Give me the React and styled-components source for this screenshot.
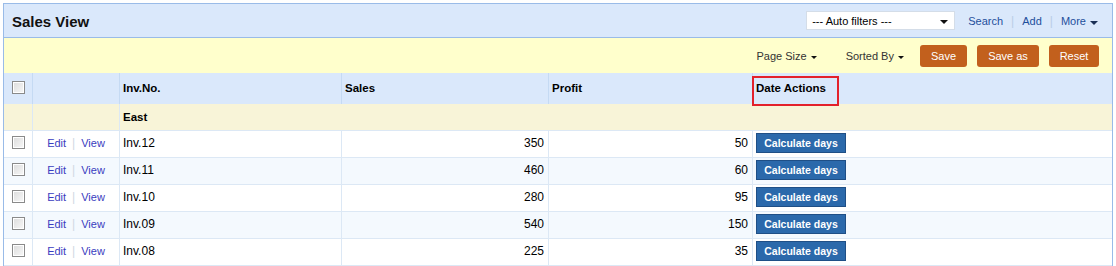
import React from 'react';
import styled, { createGlobalStyle } from 'styled-components';

const rows = [
  { inv: 'Inv.12', sales: 350, profit: 50 },
  { inv: 'Inv.11', sales: 460, profit: 60 },
  { inv: 'Inv.10', sales: 280, profit: 95 },
  { inv: 'Inv.09', sales: 540, profit: 150 },
  { inv: 'Inv.08', sales: 225, profit: 35 },
];

const App = () => {
  return (
    <>
      <GlobalStyle />
      <Panel>
        <TitleBar>
          <Title>Sales View</Title>
          <TopTools>
            <FilterSelect>
              <span>--- Auto filters ---</span>
              <Caret />
            </FilterSelect>
            <TopLink>Search</TopLink>
            <Pipe>|</Pipe>
            <TopLink>Add</TopLink>
            <Pipe>|</Pipe>
            <TopLink>More <Caret $color="#1a2f55" /></TopLink>
          </TopTools>
        </TitleBar>
        <Toolbar>
          <Menu>Page Size <Caret $small /></Menu>
          <Menu $gap={16}>Sorted By <Caret $small /></Menu>
          <OrangeButton $w={47}>Save</OrangeButton>
          <OrangeButton $w={62}>Save as</OrangeButton>
          <OrangeButton $w={50}>Reset</OrangeButton>
        </Toolbar>
        <Grid>
          <HeadCell $center><Check /></HeadCell>
          <HeadCell />
          <HeadCell>Inv.No.</HeadCell>
          <HeadCell>Sales</HeadCell>
          <HeadCell>Profit</HeadCell>
          <HeadCell $last>
            Date Actions
            <Highlight />
          </HeadCell>

          <GroupCell />
          <GroupCell />
          <GroupCell $span>East</GroupCell>

          {rows.map((r, i) => (
            <React.Fragment key={r.inv}>
              <Cell $alt={i % 2 === 1} $center><Check /></Cell>
              <Cell $alt={i % 2 === 1} $center>
                <RowLink>Edit</RowLink>
                <LinkPipe>|</LinkPipe>
                <RowLink>View</RowLink>
              </Cell>
              <Cell $alt={i % 2 === 1}>{r.inv}</Cell>
              <Cell $alt={i % 2 === 1} $right>{r.sales}</Cell>
              <Cell $alt={i % 2 === 1} $right>{r.profit}</Cell>
              <Cell $alt={i % 2 === 1} $last $action>
                <BlueButton>Calculate days</BlueButton>
              </Cell>
            </React.Fragment>
          ))}
        </Grid>
      </Panel>
    </>
  );
};

const GlobalStyle = createGlobalStyle`
  body {
    margin: 0;
    padding: 3px 3px 0 3px;
    background: #fff;
    font-family: "Liberation Sans", Arial, sans-serif;
    font-size: 12px;
    color: #000;
  }
`;

const Panel = styled.div`
  border: 1px solid #99bbe8;
  border-bottom: none;
  background: #fff;
`;

const TitleBar = styled.div`
  display: flex;
  align-items: center;
  justify-content: space-between;
  height: 33px;
  padding: 0 14px 0 8px;
  background: #dae8fb;
  border-bottom: 1px solid #99bbe8;
`;

const Title = styled.div`
  font-size: 15px;
  font-weight: bold;
  color: #111;
  padding-top: 1px;
`;

const TopTools = styled.div`
  display: flex;
  align-items: center;
`;

const FilterSelect = styled.div`
  display: flex;
  align-items: center;
  justify-content: space-between;
  box-sizing: border-box;
  width: 149px;
  height: 19px;
  padding: 0 6px 0 5px;
  margin-right: 13px;
  background: #fff;
  border: 1px solid #d4dde8;
  font-size: 11px;
  color: #000;
`;

const Caret = styled.span`
  display: inline-block;
  width: 0;
  height: 0;
  border-left: ${p => (p.$small ? 3 : 4)}px solid transparent;
  border-right: ${p => (p.$small ? 3 : 4)}px solid transparent;
  border-top: ${p => (p.$small ? 3 : 4)}px solid ${p => p.$color || '#111'};
  vertical-align: middle;
  margin-left: 1px;
  margin-top: 2px;
`;

const TopLink = styled.span`
  color: #1e4f9c;
  font-size: 11px;
  white-space: nowrap;
`;

const Pipe = styled.span`
  color: #b9cde6;
  margin: 0 8px;
`;

const Toolbar = styled.div`
  display: flex;
  align-items: center;
  justify-content: flex-end;
  height: 35px;
  padding: 0 13px 0 0;
  background: #ffffcc;
`;

const Menu = styled.span`
  color: #333;
  font-size: 11px;
  margin-right: ${p => p.$gap || 29}px;
  white-space: nowrap;
`;

const OrangeButton = styled.button`
  width: ${p => p.$w}px;
  height: 22px;
  padding: 0;
  margin-left: 10px;
  border: none;
  border-radius: 3px;
  background: #c2601d;
  color: #fff;
  font-family: "Liberation Sans", Arial, sans-serif;
  font-size: 11px;
  &:first-of-type {
    margin-left: 0;
  }
`;

const Grid = styled.div`
  display: grid;
  grid-template-columns: 29px 87px 222px 207px 204px 1fr;
`;

const HeadCell = styled.div`
  position: relative;
  display: flex;
  align-items: center;
  justify-content: ${p => (p.$center ? 'center' : 'flex-start')};
  height: 31px;
  padding: 0 3px 1px;
  box-sizing: border-box;
  background: #dae8fb;
  border-right: ${p => (p.$last ? 'none' : '1px solid #c5daf3')};
  font-weight: bold;
  font-size: 11.5px;
`;

const Highlight = styled.div`
  position: absolute;
  left: -1px;
  top: 3px;
  width: 87px;
  height: 30px;
  box-sizing: border-box;
  border: 2px solid #e3212b;
  pointer-events: none;
`;

const GroupCell = styled.div`
  grid-column: ${p => (p.$span ? 'span 4' : 'auto')};
  display: flex;
  align-items: center;
  height: 27px;
  padding: 0 3px 1px;
  box-sizing: border-box;
  background: #f8f4d8;
  border-right: ${p => (p.$span ? 'none' : '1px solid #dce8f5')};
  border-bottom: 1px solid #dce8f5;
  font-weight: bold;
  font-size: 11.5px;
`;

const Cell = styled.div`
  display: flex;
  align-items: center;
  justify-content: ${p => (p.$right ? 'flex-end' : p.$center ? 'center' : 'flex-start')};
  height: 27px;
  padding: ${p => (p.$right ? '0 4px 3px 3px' : p.$action ? '0 3px 1px 3px' : '0 3px 3px')};
  box-sizing: border-box;
  background: ${p => (p.$alt ? '#f4f9fe' : '#fff')};
  border-right: ${p => (p.$last ? 'none' : '1px solid #dce8f5')};
  border-bottom: 1px solid #dce8f5;
  font-size: 12px;
  white-space: nowrap;
`;

const Check = styled.span`
  display: inline-block;
  width: 11px;
  height: 11px;
  border: 1px solid #8a8a8a;
  background: linear-gradient(135deg, #dcdcdc, #f8f8f8);
  box-shadow: inset 0 0 0 1px #fff;
  margin-bottom: 1px;
`;

const RowLink = styled.span`
  color: #3a3dc0;
  font-size: 11px;
`;

const LinkPipe = styled.span`
  color: #d0d8e2;
  margin: 0 6px;
`;

const BlueButton = styled.button`
  width: 90px;
  height: 20px;
  padding: 0;
  border: 1px solid #1f4f86;
  background: #2b69ab;
  color: #fff;
  font-family: "Liberation Sans", Arial, sans-serif;
  font-size: 10.5px;
  font-weight: bold;
  border-radius: 0;
  margin-top: -1px;
`;

export default App;
